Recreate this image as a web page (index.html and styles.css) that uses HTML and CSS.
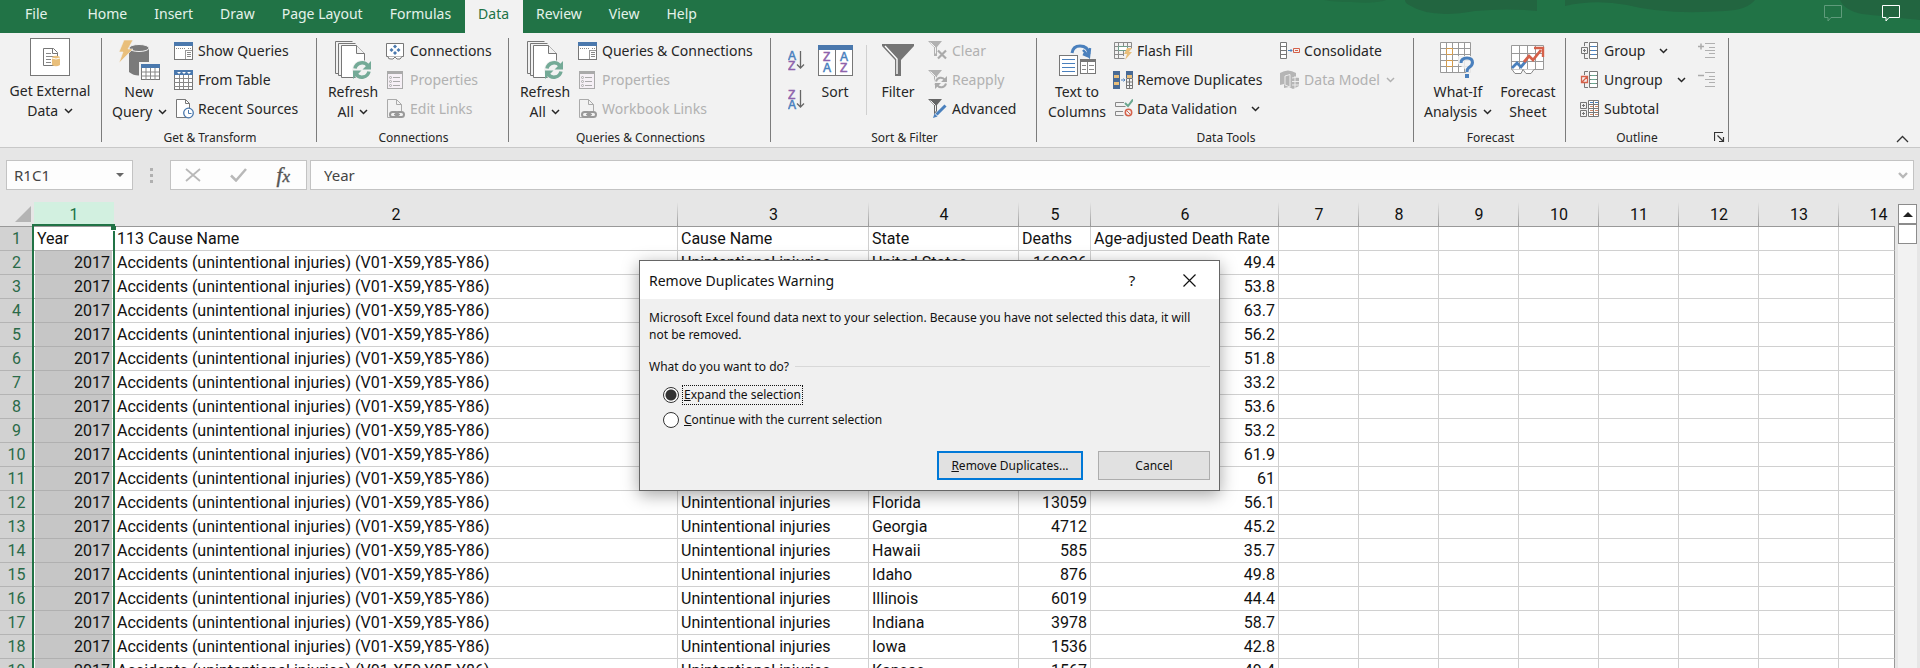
FILE: index.html
```html
<!DOCTYPE html>
<html lang="en">
<head>
<meta charset="utf-8">
<title>Workbook</title>
<link rel="stylesheet" href="styles.css">
</head>
<body>
<svg class="defs" aria-hidden="true">
  <symbol id="chev" viewBox="0 0 9 6"><path d="M1 1l3.500 3.500L8 1" fill="none" stroke="currentColor" stroke-width="1.500"/></symbol>
  <symbol id="pane" viewBox="0 0 20 20"><rect x=".5" y="1.500" width="18" height="17" fill="#fff" stroke="#777"/><path d="M0 1h19v4H0z" fill="#4a78ad"/><path d="M2 7.500h10M14 7.500h3" stroke="#888" stroke-dasharray="1 1"/><path d="M11.500 9v9M11 9.500h7" stroke="#999"/><path d="M13 11.500h4M13 13.500h4M13 15.500h4" stroke="#888"/></symbol>
  <symbol id="props" viewBox="0 0 20 20"><rect x="1.500" y="1.500" width="15" height="17" fill="#f6f0f6" stroke="#aaa"/><path d="M1 1h16v3H1z" fill="#aaa"/><path d="M7 7.500h7M7 11.500h7M7 15.500h7" stroke="#aaa"/><g fill="none" stroke="#aaa"><circle cx="4.500" cy="7.500" r="1"/><circle cx="4.500" cy="11.500" r="1"/><circle cx="4.500" cy="15.500" r="1"/></g></symbol>
  <symbol id="links" viewBox="0 0 20 20"><path d="M6 18.500H1.500V.5h9l5 5V12M10.500.5v5h5" fill="none" stroke="#aaa"/><g fill="none" stroke="#999" stroke-width="2"><rect x="4" y="13" width="8" height="5" rx="2.500"/><rect x="10" y="13" width="8" height="5" rx="2.500"/></g><path d="M8 15.500h6" stroke="#999" stroke-width="1.500"/></symbol>
  <symbol id="refresh" viewBox="0 0 36 39"><g fill="#fff" stroke="#777"><path d="M3 32.500H.5V.5h17M6 34.500H3.500V2.500h17" fill="none"/><path d="M6.500 4.500h15l8 8v24h-23z"/><path d="M21.500 4.500v8h8" fill="#f2f2f2"/></g><circle cx="27" cy="29" r="10" fill="#f2f2f2"/><g fill="none" stroke="#74aa97" stroke-width="3.500"><path d="M20 27.500a7.200 7.200 0 0 1 13-2.500"/><path d="M34 30.500a7.200 7.200 0 0 1-13 2.500"/></g><path d="M36 20v8.500h-8.500zM18 38v-8.500h8.500z" fill="#74aa97"/></symbol>
  <symbol id="funnel-s" viewBox="0 0 14 16"><path d="M0 0h14L9 6v9H6V6z" fill="currentColor"/><path d="M2.500 1.500L7.500 6.500v6" fill="none" stroke="#f2f2f2"/></symbol>
  <symbol id="bubble" viewBox="0 0 18 17"><path d="M.5.5h17v12H7l-3 3.500v-3.500H.5z" fill="none" stroke="currentColor"/></symbol>
  <symbol id="levels" viewBox="0 0 18 17"><path d="M7 1.500h10M11 5.500h6M7 8.500h10M11 11.500h6M7 15.500h10" stroke="#b0b0b0"/></symbol>
</svg>

<header class="tabbar">
  <nav class="tabs">
    <a class="tab file" href="#">File</a><a class="tab" href="#">Home</a><a class="tab" href="#">Insert</a><a class="tab" href="#">Draw</a><a class="tab" href="#">Page Layout</a><a class="tab" href="#">Formulas</a><a class="tab active" href="#">Data</a><a class="tab" href="#">Review</a><a class="tab" href="#">View</a><a class="tab" href="#">Help</a>
  </nav>
  <svg class="art" viewBox="0 0 620 33" aria-hidden="true"><g fill="#226540"><path d="M24 0h62q-12 4-34 2Q34 2 24 0z" opacity=".6"/><path d="M105 0h132v11q-30-3-62 0-44 8-66-6-4-2-4-5z"/><path d="M265 0h190q-8 10-30 11-60 4-98-6-32-6-62 1z"/><path d="M540 0h80v20q-38-4-58-6-18-4-22-14z"/></g></svg>
  <button class="bubble dim" aria-label="Comments"><svg width="18" height="17"><use href="#bubble"/></svg></button>
  <button class="bubble" aria-label="Feedback"><svg width="18" height="17"><use href="#bubble"/></svg></button>
</header>

<section class="ribbon">
  <div class="group g-external">
    <div class="body">
      <button class="big"><span class="pic"><svg width="40" height="38" viewBox="0 0 40 38"><rect x=".5" y=".5" width="39" height="37" fill="#fff" stroke="#777"/><path d="M13.500 10.500h10l4 4v13h-14zM22.500 10.500v5h5" fill="none" stroke="#777"/><path d="M16 15.500h5M16 18.500h9M16 21.500h5M16 24.500h5" stroke="#888"/><path d="M22 19q4-2.500 8 0v8q-4 2.500-8 0z" fill="#e9bf7b"/><path d="M22 20q4 2 8 0" fill="none" stroke="#fff"/></svg></span>Get External<br>Data <svg class="chev"><use href="#chev"/></svg></button>
    </div>
  </div>

  <div class="group g-transform">
    <div class="body">
      <button class="big"><span class="pic"><svg width="41" height="41" viewBox="0 0 41 41"><path d="M10 7v25q9 7 20 0V7z" fill="#7a7a7a"/><ellipse cx="20" cy="8" rx="10" ry="3.500" fill="#7a7a7a" stroke="#f2f2f2"/><path d="M5 0h9L9 9h5L0 23l4-11H0z" fill="#e9bf7b" stroke="#f2f2f2" stroke-width=".6"/><path d="M20 22h21v19H20z" fill="#f2f2f2"/><rect x="22.500" y="24.500" width="18" height="15" fill="#fff" stroke="#777"/><path d="M22 24h19v4H22z" fill="#4a78ad"/><path d="M27 28v12M31.500 28v12M36 28v12M22 32h18M22 36h18" stroke="#888"/></svg></span>New<br>Query <svg class="chev"><use href="#chev"/></svg></button>
      <div class="stack">
        <button class="row"><svg class="ico"><use href="#pane"/></svg>Show Queries</button>
        <button class="row"><svg class="ico" viewBox="0 0 20 20"><rect x=".5" y=".5" width="18" height="19" fill="#fff" stroke="#777"/><path d="M0 0h19v5H0z" fill="#4a78ad"/><path d="M3 2l2 2 2-2zM8 2l2 2 2-2zM13 2l2 2 2-2z" fill="#fff"/><path d="M5.500 5v14M9.500 5v14M14.500 5v14M0 8.500h18M0 12.500h18M0 16.500h18" stroke="#888"/></svg>From Table</button>
        <button class="row"><svg class="ico" viewBox="0 0 20 20"><path d="M2.500.5h9l4 4v14h-13z" fill="#fff" stroke="#777"/><path d="M11.500.5v4h4" fill="none" stroke="#777"/><circle cx="14.500" cy="14" r="4.800" fill="#fff" stroke="#4a78ad" stroke-width="1.300"/><path d="M14.500 11v3.500h3" fill="none" stroke="#4a78ad"/></svg>Recent Sources</button>
      </div>
    </div>
    <div class="label">Get &amp; Transform</div>
  </div>

  <div class="group g-conn">
    <div class="body">
      <button class="big"><span class="pic"><svg width="36" height="39"><use href="#refresh"/></svg></span>Refresh<br>All <svg class="chev"><use href="#chev"/></svg></button>
      <div class="stack">
        <button class="row"><svg class="ico" viewBox="0 0 20 20"><path d="M.5 2.500h17v13H.5z" fill="#fff" stroke="#777"/><path d="M2 15.500q0 3 3 2.500h2l2-2 2 2h3l2-2.500" fill="#fff" stroke="#777"/><path d="M9 3.500l2 2-2 2-2-2zM9 10l2 2-2 2-2-2zM5.500 7l2 2-2 2-2-2zM12.500 7l2 2-2 2-2-2z" fill="#4a78ad"/></svg>Connections</button>
        <button class="row" disabled><svg class="ico"><use href="#props"/></svg>Properties</button>
        <button class="row" disabled><svg class="ico"><use href="#links"/></svg>Edit Links</button>
      </div>
    </div>
    <div class="label">Connections</div>
  </div>

  <div class="group g-queries">
    <div class="body">
      <button class="big"><span class="pic"><svg width="36" height="39"><use href="#refresh"/></svg></span>Refresh<br>All <svg class="chev"><use href="#chev"/></svg></button>
      <div class="stack">
        <button class="row"><svg class="ico"><use href="#pane"/></svg>Queries &amp; Connections</button>
        <button class="row" disabled><svg class="ico"><use href="#props"/></svg>Properties</button>
        <button class="row" disabled><svg class="ico"><use href="#links"/></svg>Workbook Links</button>
      </div>
    </div>
    <div class="label">Queries &amp; Connections</div>
  </div>

  <div class="group g-sort">
    <div class="body">
      <div class="az">
        <button aria-label="Sort ascending"><svg width="18" height="24" viewBox="0 0 18 24"><text x="0" y="11" class="l blue">A</text><text x="0" y="21" class="l violet">Z</text><path d="M12.500 2v17M9 15.500l3.500 3.500 3.500-3.500" fill="none" stroke="#666" stroke-width="1.300"/></svg></button>
        <button aria-label="Sort descending"><svg width="18" height="24" viewBox="0 0 18 24"><text x="0" y="11" class="l violet">Z</text><text x="0" y="21" class="l blue">A</text><path d="M12.500 2v17M9 15.500l3.500 3.500 3.500-3.500" fill="none" stroke="#666" stroke-width="1.300"/></svg></button>
      </div>
      <button class="big"><span class="pic"><svg width="35" height="31" viewBox="0 0 35 31"><rect x=".5" y=".5" width="34" height="30" fill="#fff" stroke="#777"/><path d="M0 0h35v5H0z" fill="#4a78ad"/><path d="M17.500 5v25" stroke="#777"/><text x="5" y="16" class="l violet">Z</text><text x="5" y="27" class="l blue">A</text><text x="22" y="16" class="l blue">A</text><text x="22" y="27" class="l violet">Z</text></svg></span>Sort</button>
      <div class="rule"></div>
      <button class="big"><span class="pic"><svg width="32" height="32" viewBox="0 0 32 32"><path d="M0 0h32v2L19 16v16h-6V16L0 2z" fill="#757575"/><path d="M3 2l12 13v15" fill="none" stroke="#fff" stroke-width="1.400"/></svg></span>Filter</button>
      <div class="stack">
        <button class="row" disabled><svg class="ico" viewBox="0 0 20 20"><svg width="14" height="16"><use href="#funnel-s"/></svg><path d="M10 9.500l8 8M18 9.500l-8 8" stroke="#aaa" stroke-width="2.200"/></svg>Clear</button>
        <button class="row" disabled><svg class="ico" viewBox="0 0 20 20"><svg width="14" height="16"><use href="#funnel-s"/></svg><circle cx="13" cy="12.500" r="7" fill="#f2f2f2"/><path d="M8 11.500a5 5 0 0 1 9-1.500M18 13.500a5 5 0 0 1-9 1.500" fill="none" stroke="#aaa" stroke-width="2"/><path d="M19 6v6h-6zM7 19v-6h6z" fill="#aaa"/></svg>Reapply</button>
        <button class="row"><svg class="ico" viewBox="0 0 20 20"><svg width="14" height="16" color="#666"><use href="#funnel-s"/></svg><path d="M18 6l-10 11" stroke="#f2f2f2" stroke-width="5"/><path d="M17.500 6.500l-9 9" stroke="#4a80bd" stroke-width="3"/><path d="M5 19l1.500-4.500 3 3z" fill="#4a80bd"/></svg>Advanced</button>
      </div>
    </div>
    <div class="label">Sort &amp; Filter</div>
  </div>

  <div class="group g-tools">
    <div class="body">
      <button class="big"><span class="pic"><svg width="37" height="32" viewBox="0 0 37 32"><path d="M13 9Q14 2 21 2q8 0 9 8" fill="none" stroke="#4a80bd" stroke-width="3"/><path d="M24 6l6 6.500 1-8.500M30 12.500L24 10" fill="none" stroke="#4a80bd" stroke-width="2.500"/><rect x=".5" y="11.500" width="18" height="20" fill="#fff" stroke="#777"/><path d="M3 15.500h13M3 19.500h13M3 23.500h13M3 27.500h13" stroke="#4a80bd"/><rect x="21.500" y="15.500" width="15" height="14" fill="#fff" stroke="#777"/><path d="M21 15h16v3H21z" fill="#777"/><path d="M28.500 18v12M23 21.500h4M23 25.500h4M30 21.500h5M30 25.500h5" stroke="#888"/></svg></span>Text to<br>Columns</button>
      <div class="stack">
        <button class="row"><svg class="ico" viewBox="0 0 20 20"><path d="M1.500 1.500h17v6M1.500 1.500v16h10M5.500 1v16M10.500 1v14M14.500 1v8M1 5.500h17M1 9.500h10M1 13.500h10" fill="none" stroke="#8a8a8a"/><path d="M5.500 5.500h9v4h-9z" fill="#fff" stroke="#6f9f8b"/><path d="M14 7h5l-3 4h3l-7 8 2-6h-3z" fill="#e9bf7b"/></svg>Flash Fill</button>
        <button class="row"><svg class="ico" viewBox="0 0 20 20"><path d="M0 1h7v18H0zM13 1h7v7h-7z" fill="#476a96"/><path d="M1 5h5v3H1zM1 12h5v3H1zM14 5h5v3h-5z" fill="#e9bf7b"/><path d="M13.500 8.500h6v10h-6zM13.500 12h6M13.500 15.500h6M16.500 9v9" fill="none" stroke="#777"/><path d="M8 10h4M10.500 8.500L12 10l-1.500 1.500" fill="none" stroke="#4a80bd"/></svg>Remove Duplicates</button>
        <button class="row"><svg class="ico" viewBox="0 0 20 20"><path d="M11 3.500H2.500v4h10M10 12.500H2.500v4h8" fill="none" stroke="#888"/><path d="M12 4l3 3 5-6.500" fill="none" stroke="#6aa78f" stroke-width="2"/><circle cx="15.500" cy="13.500" r="3.200" fill="none" stroke="#d5614a" stroke-width="1.500"/><path d="M13.500 11.500l4 4" stroke="#d5614a"/></svg>Data Validation<svg class="chev far"><use href="#chev"/></svg></button>
      </div>
      <div class="stack">
        <button class="row"><svg class="ico" viewBox="0 0 20 20"><path d="M.5 1.500h6v16h-6zM.5 5.500h6M.5 9.500h6M.5 13.500h6" fill="#fff" stroke="#777"/><path d="M8 9.500h4M10.500 8L12 9.500 10.500 11" fill="none" stroke="#4a80bd"/><path d="M13.500 7.500h6v4h-6zM15 9.500h3" fill="none" stroke="#d5614a"/></svg>Consolidate</button>
        <button class="row" disabled><svg class="ico" viewBox="0 0 20 20"><path d="M0 3q8-5 16 0v4l3 1v8l-6 3-4-2-5 1v-4L0 15z" fill="#b5b5b5"/><path d="M5 6l5-1.500V17l-5-2zM12 8l6-1M12 11.500h7M12 15h7M15 6v12" fill="none" stroke="#ececec"/></svg>Data Model<svg class="chev"><use href="#chev"/></svg></button>
      </div>
    </div>
    <div class="label">Data Tools</div>
  </div>

  <div class="group g-forecast">
    <div class="body">
      <button class="big"><span class="pic"><svg width="35" height="36" viewBox="0 0 35 36"><path d="M.5.5h30v30H.5zM6.500.5v30M12.500.5v30M18.500.5v30M24.500.5v30M.5 6.500h30M.5 12.500h30M.5 18.500h30M.5 24.500h30" fill="#fff" stroke="#999"/><path d="M6.500 6.500h6v6h-6zM6.500 18.500h6v6h-6z" fill="#fff" stroke="#d39a4a"/><path d="M18 14h17v22h-7l-3-9-7-5z" fill="#f2f2f2" opacity=".85"/><path d="M21 21q0-5 6-5 5.500 0 5.500 4.500 0 3-3.500 5-2 1.500-2 4.500" fill="none" stroke="#4a80bd" stroke-width="3"/><path d="M25 32h4v4h-4z" fill="#4a80bd"/></svg></span>What-If<br>Analysis <svg class="chev"><use href="#chev"/></svg></button>
      <button class="big"><span class="pic"><svg width="34" height="30" viewBox="0 0 34 30"><path d="M.5.5h32v24H.5zM8.500.5v24M16.500.5v24M24.500.5v24M.5 8.500h32M.5 16.500h32" fill="#fff" stroke="#999"/><path d="M1 24.500l3 4h6l2-4 3 4h5l3-4" fill="#fff" stroke="#888"/><path d="M1 23l5-5 4 4 5-6" fill="none" stroke="#4a80bd" stroke-width="2.800"/><path d="M13 17l5-6 4 4 8-10" fill="none" stroke="#d5614a" stroke-width="2.800"/><path d="M23 3h9v9" fill="none" stroke="#d5614a" stroke-width="2.400"/></svg></span>Forecast<br>Sheet</button>
    </div>
    <div class="label">Forecast</div>
  </div>

  <div class="group g-outline">
    <div class="body">
      <div class="stack">
        <button class="row"><svg class="ico" viewBox="0 0 20 20"><path d="M8 1.500H4.500V5M8 17.500H4.500V13M1.500 6.500h6v6h-6zM3 9.500h3M4.500 8v3" fill="none" stroke="#777"/><path d="M9.500 1.500h8v16h-8zM9 5.500h8M9 9.500h8M9 13.500h8" fill="#fff" stroke="#777"/><path d="M11 5.500h5M11 9.500h5M11 13.500h5" stroke="#4a80bd"/></svg>Group<svg class="chev far"><use href="#chev"/></svg></button>
        <button class="row"><svg class="ico" viewBox="0 0 20 20"><path d="M8 1.500H4.500V5M8 17.500H4.500V13" fill="none" stroke="#777"/><path d="M1.500 6.500h6v6h-6zM2 12l5-5" fill="none" stroke="#d5614a" stroke-width="1.300"/><path d="M9.500 1.500h8v16h-8zM9 5.500h8M9 9.500h8M9 13.500h8" fill="#fff" stroke="#777"/><path d="M11 5.500h5M11 9.500h5M11 13.500h5" stroke="#6aa78f"/></svg>Ungroup<svg class="chev far"><use href="#chev"/></svg></button>
        <button class="row"><svg class="ico" viewBox="0 0 20 20"><path d="M.5 3.500h6v6h-6zM2 6.500h3M3.500 5v3M.5 11.500h6v6h-6zM2 14.500h3M3.500 13v3" fill="none" stroke="#777"/><path d="M8.500 1.500h10v16h-10zM8 5.500h10M8 9.500h10M8 13.500h10M13.500 2v16" fill="#fff" stroke="#777"/><path d="M10 3.500h3M15 3.500h3" stroke="#4a80bd"/><path d="M10 7.500h3M15 7.500h3M10 11.500h3M15 11.500h3M10 15.500h3M15 15.500h3" stroke="#d08a6a"/></svg>Subtotal</button>
      </div>
      <div class="details">
        <button disabled aria-label="Show Detail"><svg width="18" height="17" viewBox="0 0 18 17"><use href="#levels" width="18" height="17"/><path d="M0 4.500h6M3 1.500v6" stroke="#aaa" stroke-width="1.500"/></svg></button>
        <button disabled aria-label="Hide Detail"><svg width="18" height="17" viewBox="0 0 18 17"><use href="#levels" width="18" height="17"/><path d="M0 4.500h6" stroke="#aaa" stroke-width="1.500"/></svg></button>
      </div>
    </div>
    <div class="label">Outline</div>
    <button class="launcher" aria-label="Outline settings"><svg width="11" height="11" viewBox="0 0 11 11"><path d="M.5 9V.5H9M3.500 3.500l6 6M9.500 5v4.500H5" fill="none" stroke="#333" stroke-width="1.200"/></svg></button>
  </div>
  <button class="collapse" aria-label="Collapse ribbon"><svg width="13" height="8" viewBox="0 0 13 8"><path d="M1 7l5.500-5.500L12 7" fill="none" stroke="#333" stroke-width="1.300"/></svg></button>
</section>

<section class="formula-bar">
  <div class="field namebox"><input type="text" value="R1C1" aria-label="Name Box"><button aria-label="Names"><svg width="8" height="4" viewBox="0 0 8 4"><path d="M0 0h8L4 4z" fill="#666"/></svg></button></div>
  <div class="dots"><i></i><i></i><i></i></div>
  <div class="field fx">
    <button aria-label="Cancel entry"><svg width="16" height="14" viewBox="0 0 16 14"><path d="M1 1l14 12M15 1L1 13" stroke="#b8b8b8" stroke-width="1.800"/></svg></button>
    <button aria-label="Enter"><svg width="17" height="14" viewBox="0 0 17 14"><path d="M1 7.500l5 5L16 1" fill="none" stroke="#b8b8b8" stroke-width="2.500"/></svg></button>
    <button class="fn">f<sub>x</sub></button>
  </div>
  <div class="field formula"><input type="text" value="Year" aria-label="Formula"><button aria-label="Expand formula bar"><svg width="10" height="7" viewBox="0 0 10 7"><path d="M1 1l4 4 4-4" fill="none" stroke="#b8b8b8" stroke-width="2.400"/></svg></button></div>
</section>

<main class="sheet">
  <div class="cells">
    <table>
      <colgroup><col class="c0"><col class="c1"><col class="c2"><col class="c3"><col class="c4"><col class="c5"><col class="c6"><col class="cn"><col class="cn"><col class="cn"><col class="cn"><col class="cn"><col class="cn"><col class="cn"><col></colgroup>
      <thead><tr><th class="corner"><svg width="16" height="16" viewBox="0 0 16 16"><path d="M16 0v16H0z" fill="#b4b4b4"/></svg></th><th class="sel">1</th><th>2</th><th>3</th><th>4</th><th>5</th><th>6</th><th>7</th><th>8</th><th>9</th><th>10</th><th>11</th><th>12</th><th>13</th><th class="last">14</th></tr></thead>
      <tbody>
      <tr class="head"><th>1</th><td>Year</td><td>113 Cause Name</td><td>Cause Name</td><td>State</td><td>Deaths</td><td>Age-adjusted Death Rate</td><td></td><td></td><td></td><td></td><td></td><td></td><td></td><td></td></tr>
      <tr><th>2</th><td>2017</td><td>Accidents (unintentional injuries) (V01-X59,Y85-Y86)</td><td>Unintentional injuries</td><td>United States</td><td>169936</td><td>49.4</td><td></td><td></td><td></td><td></td><td></td><td></td><td></td><td></td></tr>
      <tr><th>3</th><td>2017</td><td>Accidents (unintentional injuries) (V01-X59,Y85-Y86)</td><td></td><td></td><td></td><td>53.8</td><td></td><td></td><td></td><td></td><td></td><td></td><td></td><td></td></tr>
      <tr><th>4</th><td>2017</td><td>Accidents (unintentional injuries) (V01-X59,Y85-Y86)</td><td></td><td></td><td></td><td>63.7</td><td></td><td></td><td></td><td></td><td></td><td></td><td></td><td></td></tr>
      <tr><th>5</th><td>2017</td><td>Accidents (unintentional injuries) (V01-X59,Y85-Y86)</td><td></td><td></td><td></td><td>56.2</td><td></td><td></td><td></td><td></td><td></td><td></td><td></td><td></td></tr>
      <tr><th>6</th><td>2017</td><td>Accidents (unintentional injuries) (V01-X59,Y85-Y86)</td><td></td><td></td><td></td><td>51.8</td><td></td><td></td><td></td><td></td><td></td><td></td><td></td><td></td></tr>
      <tr><th>7</th><td>2017</td><td>Accidents (unintentional injuries) (V01-X59,Y85-Y86)</td><td></td><td></td><td></td><td>33.2</td><td></td><td></td><td></td><td></td><td></td><td></td><td></td><td></td></tr>
      <tr><th>8</th><td>2017</td><td>Accidents (unintentional injuries) (V01-X59,Y85-Y86)</td><td></td><td></td><td></td><td>53.6</td><td></td><td></td><td></td><td></td><td></td><td></td><td></td><td></td></tr>
      <tr><th>9</th><td>2017</td><td>Accidents (unintentional injuries) (V01-X59,Y85-Y86)</td><td></td><td></td><td></td><td>53.2</td><td></td><td></td><td></td><td></td><td></td><td></td><td></td><td></td></tr>
      <tr><th>10</th><td>2017</td><td>Accidents (unintentional injuries) (V01-X59,Y85-Y86)</td><td></td><td></td><td></td><td>61.9</td><td></td><td></td><td></td><td></td><td></td><td></td><td></td><td></td></tr>
      <tr><th>11</th><td>2017</td><td>Accidents (unintentional injuries) (V01-X59,Y85-Y86)</td><td></td><td></td><td></td><td>61</td><td></td><td></td><td></td><td></td><td></td><td></td><td></td><td></td></tr>
      <tr><th>12</th><td>2017</td><td>Accidents (unintentional injuries) (V01-X59,Y85-Y86)</td><td>Unintentional injuries</td><td>Florida</td><td>13059</td><td>56.1</td><td></td><td></td><td></td><td></td><td></td><td></td><td></td><td></td></tr>
      <tr><th>13</th><td>2017</td><td>Accidents (unintentional injuries) (V01-X59,Y85-Y86)</td><td>Unintentional injuries</td><td>Georgia</td><td>4712</td><td>45.2</td><td></td><td></td><td></td><td></td><td></td><td></td><td></td><td></td></tr>
      <tr><th>14</th><td>2017</td><td>Accidents (unintentional injuries) (V01-X59,Y85-Y86)</td><td>Unintentional injuries</td><td>Hawaii</td><td>585</td><td>35.7</td><td></td><td></td><td></td><td></td><td></td><td></td><td></td><td></td></tr>
      <tr><th>15</th><td>2017</td><td>Accidents (unintentional injuries) (V01-X59,Y85-Y86)</td><td>Unintentional injuries</td><td>Idaho</td><td>876</td><td>49.8</td><td></td><td></td><td></td><td></td><td></td><td></td><td></td><td></td></tr>
      <tr><th>16</th><td>2017</td><td>Accidents (unintentional injuries) (V01-X59,Y85-Y86)</td><td>Unintentional injuries</td><td>Illinois</td><td>6019</td><td>44.4</td><td></td><td></td><td></td><td></td><td></td><td></td><td></td><td></td></tr>
      <tr><th>17</th><td>2017</td><td>Accidents (unintentional injuries) (V01-X59,Y85-Y86)</td><td>Unintentional injuries</td><td>Indiana</td><td>3978</td><td>58.7</td><td></td><td></td><td></td><td></td><td></td><td></td><td></td><td></td></tr>
      <tr><th>18</th><td>2017</td><td>Accidents (unintentional injuries) (V01-X59,Y85-Y86)</td><td>Unintentional injuries</td><td>Iowa</td><td>1536</td><td>42.8</td><td></td><td></td><td></td><td></td><td></td><td></td><td></td><td></td></tr>
      <tr><th>19</th><td>2017</td><td>Accidents (unintentional injuries) (V01-X59,Y85-Y86)</td><td>Unintentional injuries</td><td>Kansas</td><td>1567</td><td>49.4</td><td></td><td></td><td></td><td></td><td></td><td></td><td></td><td></td></tr>
      </tbody>
    </table>
    <div class="selection"><i class="handle"></i></div>
  </div>
  <div class="scrollbar"><button aria-label="Scroll up"><svg width="10" height="5" viewBox="0 0 10 5"><path d="M5 0l5 5H0z" fill="#222"/></svg></button><div class="thumb"></div></div>
</main>

<div class="dialog" role="dialog" aria-labelledby="dlg-title">
  <div class="dlg-head"><h1 id="dlg-title">Remove Duplicates Warning</h1><button aria-label="Help">?</button><button aria-label="Close"><svg width="13" height="13" viewBox="0 0 13 13"><path d="M.5.5l12 12M12.500.5l-12 12" stroke="#111" stroke-width="1.200"/></svg></button></div>
  <form class="dlg-body">
    <p>Microsoft Excel found data next to your selection. Because you have not selected this data, it will not be removed.</p>
    <div class="legend">What do you want to do?</div>
    <div class="opt"><input type="radio" name="mode" id="expand" checked><label for="expand" class="focus"><u>E</u>xpand the selection</label></div>
    <div class="opt"><input type="radio" name="mode" id="current"><label for="current"><u>C</u>ontinue with the current selection</label></div>
    <div class="actions"><button type="button" class="primary"><u>R</u>emove Duplicates...</button><button type="button">Cancel</button></div>
  </form>
</div>
</body>
</html>
```
FILE: styles.css
```css
* { box-sizing: border-box; }
html, body { height: 100%; }
body { margin: 0; display: flex; flex-direction: column; overflow: hidden; background: #e6e6e6; color: #262626; font-family: "Noto Sans", "Open Sans", sans-serif; font-size: 14px; }
button { margin: 0; padding: 0; border: 0; background: none; color: inherit; font: inherit; }
.defs { display: none; }

/* Tabs */
.tabbar { position: relative; flex: none; display: flex; height: 33px; padding-right: 20px; background: #217346; }
.art { position: absolute; right: 0; top: 0; width: 620px; height: 33px; }
.tabs { display: flex; flex: 1; padding-left: 12px; }
.tab { padding: 0 14px 0 13px; line-height: 27px; color: #e4f2ea; text-decoration: none; }
.tab.file { margin-right: 13px; }
.tab.active { background: #f2f2f2; color: #217346; }
.bubble { position: relative; height: 27px; margin-left: 40px; color: #fff; }
.bubble.dim { color: #5f9b7b; }
.bubble svg { display: block; }

/* Ribbon */
.ribbon { flex: none; display: flex; position: relative; height: 115px; background: #f2f2f2; border-bottom: 1px solid #c8c8c8; }
.group { position: relative; flex: none; display: flex; flex-direction: column; padding: 3px 9px 0 10px; background: linear-gradient(#7c7c7c, #7c7c7c) right 5px / 1px 104px no-repeat; }
.body { display: flex; flex: none; height: 87px; }
.label { padding-top: 6px; line-height: 18px; font-size: 12px; text-align: center; }
.big { display: block; flex: none; padding-top: 2px; line-height: 20px; text-align: center; white-space: nowrap; align-self: flex-start; }
.pic { display: flex; align-items: center; justify-content: center; height: 44px; }
.stack { display: flex; flex-direction: column; align-items: flex-start; }
.row { display: flex; align-items: center; height: 29px; white-space: nowrap; }
.row:disabled { color: #b1b1b1; }
.ico { width: 20px; height: 20px; margin-right: 4px; }
.chev { width: 9px; height: 6px; margin-left: 2px; vertical-align: 2px; }
.row .chev { margin-left: 6px; }
.row .chev.far { margin-left: 14px; }
.g-external { width: 102px; padding: 0; }
.g-external .body { justify-content: center; margin-right: 2px; }
.g-external .pic { height: 48px; }
.g-external .big { padding-top: 0; }
.g-transform { width: 215px; }
.g-transform .big { width: 54px; margin-right: 8px; }
.g-conn { width: 192px; }
.g-conn .big, .g-queries .big { width: 52px; margin-right: 7px; }
.g-queries { width: 262px; }
.g-sort { width: 266px; padding-left: 17px; padding-right: 16px; }
.g-sort .big { width: 36px; }
.az { display: flex; flex-direction: column; gap: 15px; width: 29px; padding-top: 13px; }
.az button { display: block; height: 24px; text-align: left; }
.az svg { display: block; }
.l { font: 12px "Liberation Sans", Arial, sans-serif; stroke-width: .5px; }
.blue { fill: #4a80bd; stroke: #4a80bd; }
.violet { fill: #8e63ab; stroke: #8e63ab; }
.rule { width: 1px; height: 70px; margin: 9px 13px 0 13px; background: #d0d0d0; }
.g-sort .stack { margin-left: 12px; }
.g-tools { width: 377px; }
.g-tools .big { width: 60px; margin-right: 6px; }
.g-tools .stack + .stack { margin: 0 10px 0 auto; }
.g-forecast { width: 152px; }
.g-forecast .body { gap: 4px; }
.g-forecast .big { min-width: 64px; }
.g-outline { width: 163px; padding-left: 14px; }
.g-outline .label { padding-right: 26px; }
.details { display: flex; flex-direction: column; gap: 12px; margin-left: auto; padding: 6px 4px 0 0; }
.details button { height: 17px; }
.details svg { display: block; }
.launcher { position: absolute; right: 4px; bottom: 4px; height: 11px; }
.launcher svg, .collapse svg { display: block; }
.collapse { align-self: flex-end; margin: 0 11px 4px auto; }

/* Formula bar */
.formula-bar { flex: none; display: flex; padding: 12px 6px; }
.field { display: flex; align-items: center; height: 30px; background: #fdfdfd; border: 1px solid #c3c3c3; }
.field input { flex: 1; min-width: 0; border: 0; padding: 0; background: none; color: #444; font: inherit; font-size: 15px; }
.namebox { width: 127px; padding: 0 8px 0 7px; }
.namebox button, .formula button { display: flex; }
.dots { display: flex; flex-direction: column; justify-content: center; gap: 3px; width: 37px; padding-left: 17px; }
.dots i { width: 3px; height: 3px; background: #b0b0b0; }
.fx { width: 137px; padding: 0 16px 0 14px; justify-content: space-between; margin-right: 3px; }
.fx button { display: flex; }
.fx .fn { align-items: baseline; color: #555; font: italic 21px/24px "Liberation Serif", serif; -webkit-text-stroke: .4px #555; }
.fn sub { font-size: 17px; line-height: 20px; }
.formula { flex: 1; padding: 0 5px 0 13px; }

/* Grid */
.sheet { flex: 1; min-height: 0; display: flex; gap: 3px; padding-right: 3px; font-family: Roboto, sans-serif; font-size: 16px; color: #111; }
.cells { position: relative; flex: 1; min-width: 0; overflow: hidden; }
table { width: 100%; table-layout: fixed; border-collapse: separate; border-spacing: 0; }
.c0 { width: 34px; } .c1, .cn { width: 80px; } .c2 { width: 564px; } .c3 { width: 191px; } .c4 { width: 150px; } .c5 { width: 72px; } .c6 { width: 188px; }
th, td { height: 24px; padding: 0 3px; overflow: hidden; border: 0 solid #d0d0d0; border-width: 0 1px 1px 0; line-height: 23px; white-space: nowrap; font-weight: 400; text-align: left; background: #fff; }
thead th { padding-top: 1px; text-align: center; background: linear-gradient(#e6e6e6, #999) right / 1px 100% no-repeat #e6e6e6; border-width: 0 0 1px; border-color: #999; }
thead .corner { padding: 0 3px 0 0; text-align: right; line-height: 0; background: #e6e6e6; }
thead .sel { background: #d2f0e0; color: #217346; }
thead .last { padding-left: 26px; background: #e6e6e6; }
tbody th { padding: 0; text-align: center; color: #2a6a48; background: #d2d2d2; border-color: #b4b4b4; }
td:nth-child(2) { background: #c6c6c6; border-bottom-color: #b0b0b0; text-align: right; box-shadow: inset 1px 0 #fff, inset -1px 0 #fff; }
td:nth-child(6), td:nth-child(7) { text-align: right; }
td:last-child { border-right-color: #999; }
.head td:nth-child(n) { text-align: left; }
.head td:nth-child(2) { background: #fff; }
.selection { position: absolute; left: 32px; top: 22px; bottom: -2px; width: 83px; border: 2px solid #217346; pointer-events: none; }
.handle { position: absolute; right: -3px; top: 0; width: 5px; height: 5px; background: #217346; border-bottom: 1px solid #fff; }
.scrollbar { width: 19px; margin-top: 2px; background: #f2f2f2; }
.scrollbar button, .thumb { display: flex; align-items: center; justify-content: center; width: 100%; height: 20px; background: #fff; border: 1px solid #8c8c8c; }

/* Dialog */
.dialog { position: absolute; left: calc(50% - 321px); top: 260px; width: 581px; background: #f0f0f0; border: 1px solid #666; box-shadow: 0 4px 16px rgba(0, 0, 0, .35); color: #111; font-size: 12px; }
.dlg-head { display: flex; align-items: center; height: 38px; padding: 0 22px 0 9px; background: #fff; }
.dlg-head h1 { flex: 1; margin: 0; font-size: 14px; font-weight: 400; }
.dlg-head button { display: flex; justify-content: center; width: 16px; margin-left: 41px; font-size: 15px; }
.dlg-body { padding: 10px 9px; }
.dlg-body p { margin: 0 0 15px; line-height: 17px; }
.legend { display: flex; align-items: center; gap: 6px; line-height: 17px; margin-bottom: 7px; }
.legend::after { content: ""; flex: 1; height: 1px; background: #d8d8d8; }
.opt { display: flex; align-items: center; gap: 3px; height: 25px; padding-left: 14px; }
.opt input { appearance: none; width: 16px; height: 16px; margin: 0; border: 1px solid #333; border-radius: 50%; background: #fff; }
.opt input:checked { background: radial-gradient(circle, #333 0 5px, #fff 6px); }
.opt label { padding: 0 1px; line-height: 18px; border: 1px solid transparent; }
.opt label.focus { border: 1px dotted #111; }
.actions { display: flex; justify-content: flex-end; gap: 15px; margin-top: 19px; }
.actions button { width: 112px; height: 29px; background: #e1e1e1; border: 1px solid #adadad; }
.actions .primary { width: 146px; border: 2px solid #0078d7; }
```
